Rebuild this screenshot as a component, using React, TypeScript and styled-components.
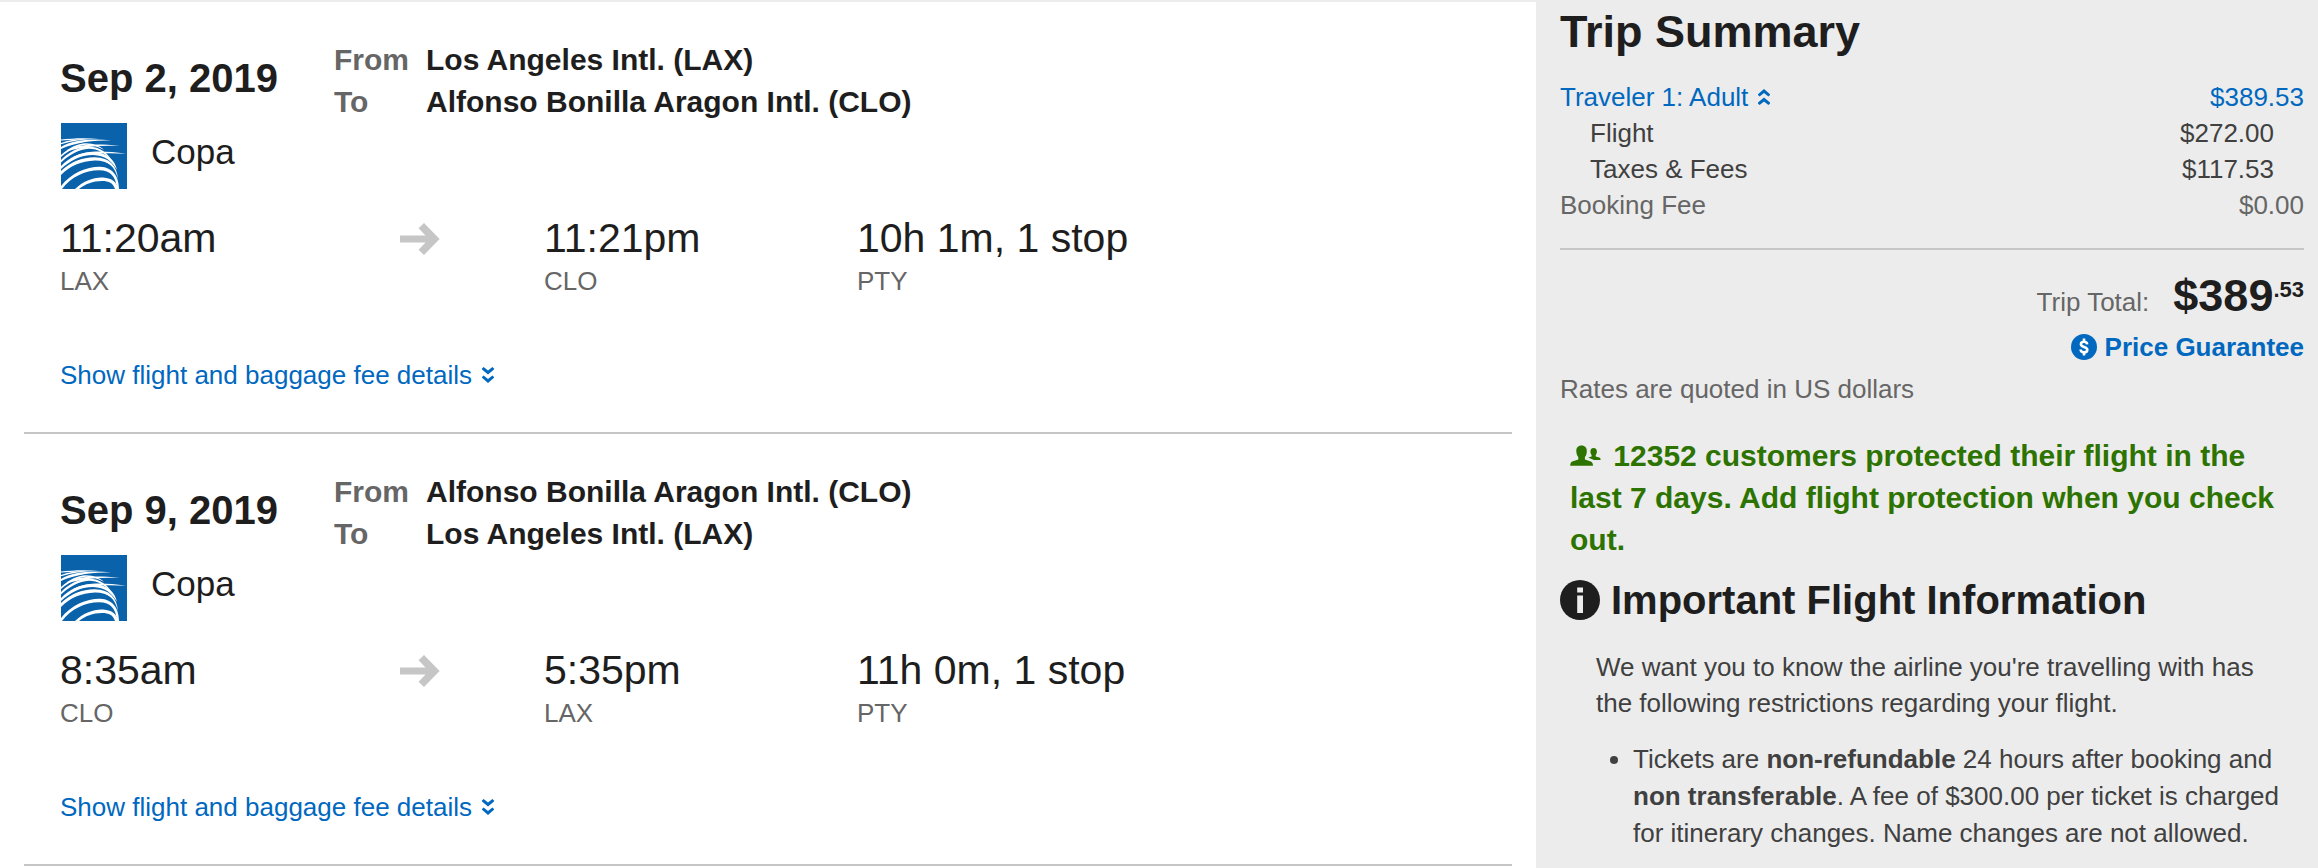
import React from "react";
import styled, { createGlobalStyle } from "styled-components";

const color = {
  ink: "#1e1e1e",
  body: "#404040",
  muted: "#666666",
  rule: "#c6c6c6",
  panel: "#ececec",
  link: "#0068bf",
  success: "#2c7300",
};

const GlobalStyle = createGlobalStyle`
  *, *::before, *::after { box-sizing: border-box; }
  body {
    margin: 0;
    background: #fff;
    color: ${color.ink};
    font-family: "Liberation Sans", Arial, sans-serif;
    font-size: 26px;
    line-height: 36px;
  }
  h1, h2, h3, p, ul, dl, dd { margin: 0; padding: 0; }
  svg { display: block; flex: none; }
`;

const Page = styled.div`
  display: grid;
  grid-template-columns: minmax(0, 1fr) 782px;
  min-height: 100vh;
`;

const Itinerary = styled.main`
  border-top: 2px solid ${color.panel};
  padding: 0 24px;
`;

const Leg = styled.section`
  padding: 37px 36px 39px;
  border-bottom: 2px solid ${color.rule};
`;

const LegHeader = styled.header`
  display: grid;
  grid-template-columns: 274px 1fr;
  align-items: start;
`;

const LegDate = styled.h2`
  padding-top: 11px;
  font-size: 40px;
  line-height: 56px;
`;

const Route = styled.dl`
  display: grid;
  grid-template-columns: 92px 1fr;
  font-size: 30px;
  line-height: 42px;
  font-weight: 700;
`;

const RouteLabel = styled.dt`
  color: ${color.muted};
`;

const RouteValue = styled.dd``;

const Airline = styled.div`
  display: flex;
  gap: 24px;
  padding-left: 1px;
  font-size: 35px;
  line-height: 58px;
`;

const Schedule = styled.div`
  display: grid;
  grid-template-columns: 340px 144px 313px 1fr;
  margin-top: 24px;
`;

const Time = styled.div`
  font-size: 41px;
  line-height: 50px;
`;

const Airport = styled.div`
  color: ${color.muted};
`;

const ArrowCell = styled.div`
  padding-top: 10px;
`;

const LinkButton = styled.button`
  display: inline-flex;
  align-items: center;
  gap: 10px;
  padding: 0;
  border: 0;
  background: none;
  color: ${color.link};
  font: inherit;
  vertical-align: top;
  cursor: pointer;
`;

const DetailsRow = styled.div`
  display: flex;
  margin-top: 58px;
`;

const Summary = styled.aside`
  padding: 4px 14px 16px 24px;
  background: ${color.panel};
`;

const SummaryTitle = styled.h1`
  font-size: 45px;
  line-height: 56px;
`;

const Fares = styled.table`
  width: 100%;
  margin-top: 19px;
  border-collapse: collapse;
`;

const FareRow = styled.tr<{ $kind: "traveler" | "item" | "fee" }>`
  color: ${(p) =>
    p.$kind === "traveler" ? color.link : p.$kind === "item" ? color.body : color.muted};

  th, td { padding: 0 ${(p) => (p.$kind === "item" ? 30 : 0)}px; }
  th { text-align: left; font-weight: 400; }
  td { text-align: right; }
`;

const Totals = styled.div`
  display: flex;
  flex-direction: column;
  align-items: flex-end;
  margin-top: 25px;
  padding-top: 18px;
  border-top: 2px solid ${color.rule};
`;

const Total = styled.div`
  display: flex;
  align-items: baseline;
  gap: 24px;
  color: ${color.muted};
`;

const TotalPrice = styled.strong`
  display: flex;
  align-items: flex-start;
  color: ${color.ink};
  font-size: 45px;
  line-height: 56px;
`;

const Cents = styled.span`
  font-size: 22px;
  line-height: 44px;
`;

const Guarantee = styled.a`
  display: flex;
  align-items: center;
  gap: 8px;
  margin-top: 5px;
  color: ${color.link};
  font-weight: 700;
  text-decoration: none;
`;

const Rates = styled.p`
  margin-top: 6px;
  color: ${color.muted};
`;

const Protection = styled.p`
  margin-top: 28px;
  padding: 0 10px;
  color: ${color.success};
  font-size: 30px;
  line-height: 42px;
  font-weight: 700;

  svg { display: inline-block; margin-right: 4px; vertical-align: baseline; }
`;

const NoticeTitle = styled.h2`
  display: flex;
  align-items: center;
  gap: 11px;
  margin-top: 10px;
  font-size: 40px;
  line-height: 58px;
`;

const NoticeText = styled.div`
  margin-top: 20px;
  padding: 0 12px 0 36px;
  color: ${color.body};
`;

const NoticeIntro = styled.p`
  padding-right: 24px;
`;

const Restrictions = styled.ul`
  margin-top: 20px;
  padding-left: 37px;
  line-height: 37px;
`;

const CopaLogo = () => (
  <svg width="66" height="66" viewBox="0 0 66 66" role="img" aria-label="Copa Airlines">
    <rect width="66" height="66" fill="#0a62ab" />
    <g fill="#fff">
      <path d="M14 66C22 58 33 54 42 54.5C52 55 56 60 57 66H54C52 60 48 58 41 58C32 58 24 61 18 66Z" />
      <path d="M0 63C10 50 26 43.5 39 43.7C52 44 58 54 58 66H56C55 54 50 47.5 38 47.3C24 47.5 10 54 1 66H0Z" />
      <path d="M0 48C9 39 22 34 34 34.2C49 34.5 56 43 57 56C54 44 48 37.5 34 37.5C20 38 9 43 0 52Z" />
      <path d="M0 43C9 34 20 29 32 29C46 29.5 54 37 56 47C51 38 44 32.5 32 32C19 32 9 38 0 46Z" />
      <path d="M0 37C8 29 18 23.5 28 23.5C39 24 47 30 51 38C44 30 37 26 28 25.8C18 26.3 8 32 0 39.5Z" />
      <path d="M0 32C8 25 16 20.5 25 20.3C33 20.5 39 23 43 27C37 23.5 32 22.3 25 21.8C16 22.5 8 27.5 0 34Z" />
      <path d="M12 34C24 27.5 40 27 65 30.7C45 29.5 28 30 12 35.4Z" />
      <path d="M6 27C18 21 34 20.5 59 22.7C40 22.5 24 23 6 28.4Z" />
      <path d="M0 24C12 17 28 15.5 50 17.3C32 17.6 16 19 0 26Z" />
      <path d="M0 20C8 16.5 18 15.5 30 16C20 17 10 18 0 21.2Z" />
      <path d="M0 16.5C10 15.5 24 14.5 38 16C24 16 12 16.6 0 17.6Z" />
    </g>
  </svg>
);

const ArrowRight = () => (
  <svg width="40" height="32" viewBox="0 0 40 32" fill="#c6c6c6" aria-hidden="true">
    <path d="M0 12.4H25.5L18.6 5.3L24 0L39.6 16L24 32L18.6 26.7L25.5 19.6H0Z" />
  </svg>
);

const Chevrons = ({ up = false }: { up?: boolean }) => (
  <svg width="12" height="16" viewBox="0 0 12 16" fill="currentColor" aria-hidden="true">
    {up ? (
      <path d="M0 5.2L6 0L12 5.2V6L10.4 7.6L6 4L1.6 7.6L0 6ZM0 13.6L6 8.4L12 13.6V14.4L10.4 16L6 12.4L1.6 16L0 14.4Z" />
    ) : (
      <path d="M0 2.4L6 7.6L12 2.4V1.6L10.4 0L6 3.6L1.6 0L0 1.6ZM0 10.8L6 16L12 10.8V10L10.4 8.4L6 12L1.6 8.4L0 10Z" />
    )}
  </svg>
);

const DollarBadge = () => (
  <svg width="26" height="26" viewBox="0 0 26 26" fill="none" aria-hidden="true">
    <circle cx="13" cy="13" r="13" fill="currentColor" />
    <path
      d="M16.2 10.3C16 8.6 14.8 7.7 13 7.7C11.2 7.7 9.9 8.7 9.9 10.2C9.9 13.7 16.3 12.2 16.3 15.8C16.3 17.4 14.9 18.4 13 18.4C11 18.4 9.7 17.3 9.6 15.5"
      stroke="#fff"
      strokeWidth="2.6"
    />
    <path d="M13 4.6V8M13 18V21.4" stroke="#fff" strokeWidth="2.6" />
  </svg>
);

const People = () => (
  <svg width="31" height="21" viewBox="0 0 31 21" fill="currentColor" aria-hidden="true">
    <path d="M11.5 .5C8 .5 6.2 2.8 6.3 6.2C6.4 8.8 7.2 10.8 8.3 12V14.6L2.4 16.4C.9 17 .2 18.4 .2 20.8H23C23 18.4 22.2 17 20.7 16.4L14.9 14.6V12C16 10.8 16.8 8.8 16.8 6.2C16.9 2.8 15 .5 11.5 .5Z" />
    <path d="M23.6 3C21.4 3 20.3 4.5 20.4 6.6C20.4 8.2 20.9 9.3 21.6 10.1V11.6L18.2 12.6L24 14.9H30.6C30.6 13.6 30.2 12.9 29.2 12.5L25.7 11.5V10.1C26.4 9.3 26.9 8.2 26.9 6.6C27 4.5 25.8 3 23.6 3Z" />
  </svg>
);

const InfoBadge = () => (
  <svg width="40" height="40" viewBox="0 0 40 40" aria-hidden="true">
    <circle cx="20" cy="20" r="20" fill={color.ink} />
    <path d="M17.2 7.6H23V12.6H17.2ZM17.2 15.6H23V33H17.2Z" fill={color.panel} />
  </svg>
);

interface Flight {
  date: string;
  from: string;
  to: string;
  depart: [time: string, airport: string];
  arrive: [time: string, airport: string];
  duration: [summary: string, stop: string];
}

const LAX = "Los Angeles Intl. (LAX)";
const CLO = "Alfonso Bonilla Aragon Intl. (CLO)";

const flights: Flight[] = [
  {
    date: "Sep 2, 2019",
    from: LAX,
    to: CLO,
    depart: ["11:20am", "LAX"],
    arrive: ["11:21pm", "CLO"],
    duration: ["10h 1m, 1 stop", "PTY"],
  },
  {
    date: "Sep 9, 2019",
    from: CLO,
    to: LAX,
    depart: ["8:35am", "CLO"],
    arrive: ["5:35pm", "LAX"],
    duration: ["11h 0m, 1 stop", "PTY"],
  },
];

const Stop = ({ value: [time, airport] }: { value: [string, string] }) => (
  <div>
    <Time>{time}</Time>
    <Airport>{airport}</Airport>
  </div>
);

const FlightLeg = ({ flight }: { flight: Flight }) => (
  <Leg>
    <LegHeader>
      <LegDate>{flight.date}</LegDate>
      <Route>
        <RouteLabel>From</RouteLabel>
        <RouteValue>{flight.from}</RouteValue>
        <RouteLabel>To</RouteLabel>
        <RouteValue>{flight.to}</RouteValue>
      </Route>
    </LegHeader>
    <Airline>
      <CopaLogo />
      <span>Copa</span>
    </Airline>
    <Schedule>
      <Stop value={flight.depart} />
      <ArrowCell>
        <ArrowRight />
      </ArrowCell>
      <Stop value={flight.arrive} />
      <Stop value={flight.duration} />
    </Schedule>
    <DetailsRow>
      <LinkButton type="button">
        Show flight and baggage fee details
        <Chevrons />
      </LinkButton>
    </DetailsRow>
  </Leg>
);

export default function App() {
  return (
    <>
      <GlobalStyle />
      <Page>
        <Itinerary>
          {flights.map((flight) => (
            <FlightLeg key={flight.date} flight={flight} />
          ))}
        </Itinerary>
        <Summary>
          <SummaryTitle>Trip Summary</SummaryTitle>
          <Fares>
            <tbody>
              <FareRow $kind="traveler">
                <th scope="row">
                  <LinkButton type="button">
                    Traveler 1: Adult
                    <Chevrons up />
                  </LinkButton>
                </th>
                <td>$389.53</td>
              </FareRow>
              <FareRow $kind="item">
                <th scope="row">Flight</th>
                <td>$272.00</td>
              </FareRow>
              <FareRow $kind="item">
                <th scope="row">Taxes &amp; Fees</th>
                <td>$117.53</td>
              </FareRow>
              <FareRow $kind="fee">
                <th scope="row">Booking Fee</th>
                <td>$0.00</td>
              </FareRow>
            </tbody>
          </Fares>
          <Totals>
            <Total>
              Trip Total:
              <TotalPrice>
                $389<Cents>.53</Cents>
              </TotalPrice>
            </Total>
            <Guarantee href="#price-guarantee">
              <DollarBadge />
              Price Guarantee
            </Guarantee>
          </Totals>
          <Rates>Rates are quoted in US dollars</Rates>
          <Protection>
            <People /> 12352 customers protected their flight in the last 7 days. Add flight
            protection when you check out.
          </Protection>
          <NoticeTitle>
            <InfoBadge />
            Important Flight Information
          </NoticeTitle>
          <NoticeText>
            <NoticeIntro>
              We want you to know the airline you're travelling with has the following restrictions
              regarding your flight.
            </NoticeIntro>
            <Restrictions>
              <li>
                Tickets are <strong>non-refundable</strong> 24 hours after booking and{" "}
                <strong>non transferable</strong>. A fee of $300.00 per ticket is charged for
                itinerary changes. Name changes are not allowed.
              </li>
            </Restrictions>
          </NoticeText>
        </Summary>
      </Page>
    </>
  );
}
